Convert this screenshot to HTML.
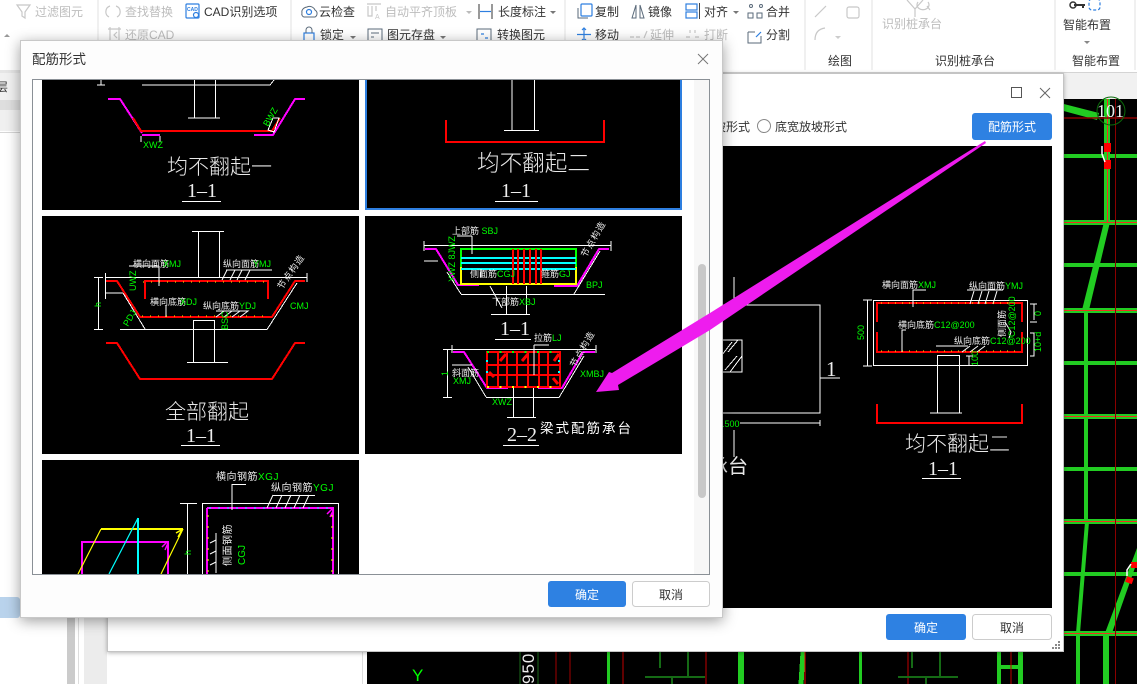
<!DOCTYPE html>
<html><head><meta charset="utf-8"><style>
html,body{margin:0;padding:0;background:#fff;width:1137px;height:684px;overflow:hidden}
svg{display:block;font-family:"Liberation Sans","Noto Sans CJK SC",sans-serif}
.t{font-size:12px;fill:#333}.d{font-size:12px;fill:#bdbdbd}
.c{font-size:9px;fill:#eee}.g{font-size:9px;fill:#0f0}
.big{font-size:21px;fill:#e8e8e8;font-family:"Noto Sans CJK SC","Liberation Sans",sans-serif;font-weight:300}
.num{font-size:20px;fill:#eee;font-family:"Liberation Serif",serif}
.w{stroke:#fff;fill:none;stroke-width:1}
.r{stroke:#f00;fill:none;stroke-width:2}.m{stroke:#f0f;fill:none;stroke-width:2}
.ic{fill:none;stroke:#5a6a7a;stroke-width:1}.ib{fill:none;stroke:#2e7fe0;stroke-width:1.2}.ig{fill:none;stroke:#c8c8c8;stroke-width:1.2}
</style></head><body>
<svg width="1137" height="684" viewBox="0 0 1137 684" xmlns="http://www.w3.org/2000/svg">
<defs>
<filter id="s" x="-5%" y="-5%" width="110%" height="112%"><feDropShadow dx="0" dy="3" stdDeviation="7" flood-color="#000" flood-opacity=".38"/></filter>
<filter id="s2" x="-3%" y="-3%" width="106%" height="106%"><feDropShadow dx="0" dy="1" stdDeviation="2" flood-color="#000" flood-opacity=".3"/></filter>
</defs>
<rect width="1137" height="684" fill="#fff"/>
<!-- ribbon -->
<rect x="0" y="72" width="1137" height="28" fill="#f1f1f1"/>
<line x1="0" y1="72.5" x2="1137" y2="72.5" stroke="#d4d4d4"/>
<g stroke="#e2e2e2"><line x1="98" y1="0" x2="98" y2="40"/><line x1="291" y1="0" x2="291" y2="40"/><line x1="565" y1="0" x2="565" y2="40"/><line x1="805" y1="0" x2="805" y2="70"/><line x1="872" y1="0" x2="872" y2="70"/><line x1="1055" y1="0" x2="1055" y2="70"/><line x1="1135" y1="0" x2="1135" y2="70"/></g>
<path d="M17 5h13l-5 7v6l-3-2v-4z" class="ig"/>
<text x="35" y="16" class="d">过滤图元</text>
<path d="M4 37l3-3 3 3z" fill="#999"/>
<path d="M110 6a6 6 0 0 0-1 11M116 6a6 6 0 0 1 1 11" class="ig"/>
<text x="125" y="16" class="d">查找替换</text>
<path d="M108 29h13M110 27v13M119 27v13M117 32l-3 3 3 3" class="ig"/>
<text x="125" y="39" class="d">还原CAD</text>
<rect x="186" y="4" width="13" height="14" rx="1" class="ib" stroke="#345"/>
<text x="187" y="11" font-size="5" fill="#2e7fe0" font-weight="bold">CAD</text>
<circle cx="196" cy="15" r="2.5" class="ib"/>
<text x="204" y="16" class="t">CAD识别选项</text>
<path d="M302 13a6 5 0 0 1 5-6a6 6 0 0 1 8 3a4 4 0 0 1 0 7h-11a3 3 0 0 1-2-4z" class="ic"/><circle cx="309" cy="12" r="2.5" class="ib"/>
<text x="319" y="16" class="t">云检查</text>
<path d="M367 4h14M368 6v10h4V6M376 6v5" class="ig"/><text x="375" y="19" font-size="7" fill="#c8c8c8">A</text>
<text x="385" y="16" class="d">自动平齐顶板</text>
<path d="M466 11l3 3 3-3z" fill="#bbb"/>
<path d="M479 4v15M492 4v15" stroke="#333" fill="none"/><path d="M480 11.5h11" class="ib"/>
<text x="498" y="16" class="t">长度标注</text>
<path d="M550 11l3 3 3-3z" fill="#777"/>
<rect x="304" y="33" width="10" height="9" class="ib" fill="#cfe0f5"/><path d="M306 33v-3a3 3 0 0 1 6 0v3" class="ic"/>
<text x="320" y="39" class="t">锁定</text>
<path d="M350 36l3 3 3-3z" fill="#777"/>
<rect x="368" y="29" width="14" height="14" class="ic"/><path d="M371 33h8M371 37h3" class="ic"/>
<text x="387" y="39" class="t">图元存盘</text>
<path d="M440 36l3 3 3-3z" fill="#777"/>
<rect x="477" y="29" width="14" height="14" class="ic"/><path d="M481 34h3M485 38h3" class="ib"/>
<text x="497" y="39" class="t">转换图元</text>
<rect x="581" y="4" width="11" height="12" rx="1" class="ib" fill="#fff"/><path d="M578 8v10h10" class="ic"/>
<text x="595" y="16" class="t">复制</text>
<path d="M632 18l4-13v13zM640 5l4 13h-4z" class="ic"/>
<text x="648" y="16" class="t">镜像</text>
<rect x="686" y="4" width="11" height="6" class="ib"/><rect x="686" y="12" width="11" height="6" class="ib"/><line x1="699.5" y1="3" x2="699.5" y2="19" stroke="#444"/>
<text x="704" y="16" class="t">对齐</text>
<path d="M733 11l3 3 3-3z" fill="#777"/>
<circle cx="751" cy="6" r="1.5" class="ic"/><circle cx="761" cy="6" r="1.5" class="ic"/><rect x="748" y="13" width="5" height="5" class="ic"/><rect x="757" y="13" width="5" height="5" class="ic"/>
<text x="766" y="16" class="t">合并</text>
<path d="M584 28v13M577 34.500h14M582 30l2-2 2 2M582 39l2 2 2-2" class="ib"/>
<text x="595" y="39" class="t">移动</text>
<path d="M630 37h4M636 37h4M644 38l3-7" class="ig"/>
<text x="650" y="39" class="d">延伸</text>
<path d="M686 37h4M695 37h4M690 30v3M695 30v3" class="ig"/>
<text x="704" y="39" class="d">打断</text>
<path d="M748 32h7M761 36v7h-13V32" class="ic"/><path d="M756 37l5-5" class="ib"/>
<text x="766" y="39" class="t">分割</text>
<path d="M815 17l11-11" class="ig"/><rect x="847" y="7" width="12" height="11" rx="2" class="ig"/>
<path d="M815 40c0-7 3-11 10-12" class="ig"/><path d="M835 36l3 3 3-3z" fill="#ccc"/>
<text x="828" y="65" class="t">绘图</text>
<path d="M907 0l8 9v0M923 0l-8 9v8M918 2a6 5 0 1 0 10 0M927 6l3 4" class="ig"/>
<text x="882" y="28" class="d">识别桩承台</text>
<text x="935" y="65" class="t">识别桩承台</text>
<path d="M1074 5h11M1083 5v3" stroke="#333" stroke-width="2" fill="none"/><circle cx="1073" cy="5" r="3" fill="none" stroke="#333" stroke-width="1.5"/>
<rect x="1089" y="-1" width="11" height="11" rx="3" class="ib" stroke-width="1.500" stroke-dasharray="3 2"/>
<text x="1063" y="29" class="t">智能布置</text>
<path d="M1084 41l3 3 3-3z" fill="#888"/>
<text x="1072" y="65" class="t">智能布置</text>

<!-- left panel -->
<rect x="0" y="70" width="22" height="3" fill="#e6e6e6"/>
<text x="-4" y="91" font-size="12" fill="#333">层</text>
<rect x="0" y="100" width="22" height="10" fill="#dedede"/>
<rect x="0" y="110" width="22" height="21" fill="#f0f0f0"/>
<line x1="0" y1="132.5" x2="22" y2="132.5" stroke="#d6d6d6"/>
<rect x="-5" y="597" width="25" height="21" rx="3" fill="#b9d3ec"/>
<!-- lower strips -->
<rect x="67" y="618" width="8" height="66" fill="#cbcbcb"/>
<line x1="78.5" y1="618" x2="78.5" y2="684" stroke="#ddd"/>
<rect x="84" y="618" width="23" height="66" fill="#ececec"/>
<line x1="362.5" y1="652" x2="362.5" y2="684" stroke="#ddd"/>

<!-- bottom CAD + right CAD -->
<rect x="367" y="652" width="770" height="32" fill="#000"/>
<rect x="1060" y="99" width="77" height="585" fill="#000"/>
<g shape-rendering="crispEdges">
<text x="412" y="681" font-size="17" fill="#0f0">Y</text>
<line x1="520" y1="652" x2="520" y2="684" stroke="#1a6a1a"/>
<line x1="538" y1="652" x2="538" y2="684" stroke="#1a6a1a"/>
<line x1="556" y1="652" x2="556" y2="684" stroke="#a00000"/>
<line x1="570" y1="652" x2="570" y2="684" stroke="#a00000"/>
<rect x="607" y="652" width="3" height="32" fill="#22cc22"/>
<line x1="623" y1="652" x2="623" y2="684" stroke="#c00000"/>
<path d="M660 652v16M688 652v16v9M645 677h60M672 677v7" stroke="#156a15" stroke-width="2" fill="none"/>
<line x1="706" y1="652" x2="706" y2="684" stroke="#c00000"/>
<rect x="738" y="652" width="6" height="32" fill="#22cc22"/>
<path d="M803 652l-2 32" stroke="#22cc22" stroke-width="5"/>
<line x1="805" y1="652" x2="805" y2="684" stroke="#f00000"/>
<rect x="859" y="652" width="3" height="32" fill="#22cc22"/>
<line x1="908" y1="652" x2="908" y2="684" stroke="#c00000"/>
<path d="M912 652v16M940 652v16v9M898 677h60M926 677v7" stroke="#156a15" stroke-width="2" fill="none"/>
<rect x="997" y="652" width="4" height="32" fill="#22cc22"/><rect x="1018" y="652" width="5" height="32" fill="#22cc22"/><rect x="997" y="665" width="25" height="4" fill="#22cc22"/>
<line x1="1011" y1="652" x2="1011" y2="684" stroke="#c00000"/>
</g>
<text transform="translate(534,684) rotate(-90)" font-size="17" fill="#eee" letter-spacing="1">950</text>
<!-- right grid -->
<g fill="#22cc22">
<rect x="1060" y="154" width="77" height="4"/>
<rect x="1060" y="220" width="77" height="5"/>
<rect x="1060" y="263" width="77" height="4"/>
<rect x="1060" y="308" width="77" height="5"/>
<rect x="1060" y="361" width="77" height="4"/>
<rect x="1060" y="414" width="77" height="5"/>
<rect x="1060" y="467" width="77" height="4"/>
<rect x="1060" y="519" width="77" height="5"/>
<rect x="1060" y="572" width="77" height="4"/>
<rect x="1060" y="631" width="77" height="5"/>
<rect x="1104" y="99" width="6" height="124"/>
<rect x="1084" y="310" width="4" height="212"/>
<rect x="1076" y="632" width="4" height="52"/>
<rect x="1103" y="632" width="6" height="52"/>
<polygon points="1060,103 1099,113 1097,120 1060,110"/>
<polygon points="1104,222 1110,222 1089,310 1082,310"/>
<polygon points="1085,522 1089,522 1080,633 1076,633"/>
<polygon points="1137,548 1137,562 1112,633 1105,633"/>
</g>
<g stroke="#f03020" stroke-width="1">
<line x1="1060" y1="222.5" x2="1137" y2="222.5"/><line x1="1060" y1="310.5" x2="1137" y2="310.5"/><line x1="1060" y1="416.5" x2="1137" y2="416.5"/><line x1="1060" y1="521.5" x2="1137" y2="521.5"/><line x1="1060" y1="633.5" x2="1137" y2="633.5"/><line x1="1107.5" y1="99" x2="1107.5" y2="222"/>
</g>
<line x1="1115.5" y1="99" x2="1115.5" y2="684" stroke="#8a0000"/>
<line x1="1060" y1="118" x2="1137" y2="118" stroke="#8a0000" stroke-width="1.5"/>
<rect x="1104" y="143" width="7" height="9" fill="#f00"/><rect x="1104" y="160" width="7" height="9" fill="#f00"/>
<path d="M1102 146v8l3 8" stroke="#fff" fill="none" stroke-width="1.5"/>
<rect x="1126" y="577" width="7" height="6" fill="#f00" transform="rotate(20 1129 580)"/><rect x="1131" y="562" width="6" height="6" fill="#f00"/>
<path d="M1131 564l-4 6v6" stroke="#fff" fill="none" stroke-width="1.5"/>
<circle cx="1111" cy="111" r="14" fill="none" stroke="#0a6a0a"/>
<text x="1097" y="117" font-size="18" fill="#eee" font-family="Liberation Serif">101</text>

<!-- dialog 2 -->
<rect x="107.500" y="73.500" width="956" height="578" fill="#fff" stroke="#c4c4c4" filter="url(#s2)"/>
<rect x="1011.500" y="87.500" width="10" height="10" fill="none" stroke="#555"/>
<path d="M1040 88l10 10M1050 88l-10 10" stroke="#666" fill="none"/>
<text x="714" y="131" font-size="12" fill="#333">坡形式</text>
<circle cx="764" cy="126" r="6.500" fill="#fff" stroke="#888"/>
<text x="775" y="131" font-size="12" fill="#333">底宽放坡形式</text>
<rect x="972" y="113" width="80" height="27" rx="3" fill="#2e81e2"/>
<text x="988" y="131" font-size="12" fill="#fff">配筋形式</text>
<rect x="716" y="146" width="336" height="462" fill="#000"/>
<g shape-rendering="crispEdges">
<path d="M720 305H820V413H720" class="w"/>
<path d="M734 277v28M734 430v27" class="w"/>
<rect x="715" y="340" width="27" height="32" class="w"/>
<path d="M725 370l12-14M730 372l12-16M722 355l10-13M728 352l10-12" class="w"/>
<path d="M820 378h20" class="w"/>
<path d="M740 423h80M820 420v6" class="w"/>
</g>
<text x="826" y="376" style="font-size:21px;fill:#eee;font-family:'Liberation Serif',serif">1</text>
<text x="722" y="427" font-size="9" fill="#0f0">.500</text>
<text x="714" y="298" class="num">2</text>
<text x="714" y="453" class="num">2</text>
<text x="708" y="473" font-size="20" fill="#e8e8e8">承台</text>
<g shape-rendering="crispEdges">
<rect x="873.500" y="300.500" width="154" height="65" class="w"/>
<path d="M877 322V303H1022V322" class="r"/>
<path d="M877 332V352H1022V332" class="r"/>
<path d="M937.500 413V355.500H959.500V413M930 413h32" class="w"/>
<path d="M877 404V423H1022V404" class="r" stroke-width="2"/>
<path d="M867.500 300v66M863 300h9M863 366h9" class="w"/>
<path d="M1030 304h7M1034 304v16M1030 322h7M1030 333h4v23h-4" class="w"/>
<path d="M969 366v-10M966 356h7" class="w"/>
<path d="M906 330h-4v22M925 329" class="w"/>
<path d="M926 290h-13v17" class="w"/>
<path d="M967 290h36" class="w"/>
<path d="M936 346h32" class="w"/>
<path d="M922 478.500h39" class="w"/>
</g>
<path d="M970 304l4-13M978 304l4-13M985 304l4-13M993 304l4-13M962 352l8-6M970 352l8-6M977 352l8-6M1005 322l6 10l-2 6" class="w"/>
<path d="M881 303H1020M881 351H1020" stroke="#ff0" stroke-width="1" stroke-dasharray="1 6" fill="none"/>
<text x="882" y="288" class="c">横向面筋<tspan fill="#0f0">XMJ</tspan></text>
<text x="969" y="289" class="c">纵向面筋<tspan fill="#0f0">YMJ</tspan></text>
<text x="898" y="328" class="c">横向底筋<tspan fill="#0f0">C12@200</tspan></text>
<text x="954" y="344" class="c">纵向底筋<tspan fill="#0f0">C12@200</tspan></text>
<text transform="translate(864,340) rotate(-90)" class="g">500</text>
<text transform="translate(1005,337) rotate(-90)" class="c">侧面筋</text>
<text transform="translate(1015,337) rotate(-90)" class="g">C12@200</text>
<text transform="translate(1041,316) rotate(-90)" class="g">0</text>
<text transform="translate(1041,352) rotate(-90)" class="g">10+d</text>
<text transform="translate(978,366) rotate(-90)" class="g">100</text>
<text x="905" y="451" class="big">均不翻起二</text>
<text x="928" y="475" class="num">1–1</text>
<rect x="886" y="614" width="80" height="26" rx="3" fill="#2e81e2"/>
<text x="914" y="632" font-size="12" fill="#fff">确定</text>
<rect x="972.500" y="614.500" width="79" height="25" rx="3" fill="#fff" stroke="#ccc"/>
<text x="1000" y="632" font-size="12" fill="#333">取消</text>
<g fill="#888"><rect x="1058" y="641" width="2" height="2"/><rect x="1055" y="644" width="2" height="2"/><rect x="1058" y="644" width="2" height="2"/><rect x="1052" y="647" width="2" height="2"/><rect x="1055" y="647" width="2" height="2"/><rect x="1058" y="647" width="2" height="2"/></g>

<!-- dialog 1 -->
<rect x="20.500" y="40.500" width="702" height="577" fill="#fdfdfd" stroke="#c8c8c8" filter="url(#s)"/>
<text x="32" y="64" font-size="13.500" fill="#333">配筋形式</text>
<path d="M698 54l10 10M708 54l-10 10" stroke="#777" fill="none"/>
<rect x="32.500" y="79.500" width="677" height="495" fill="#fff" stroke="#8a9096"/>
<rect x="694" y="80" width="15" height="494" fill="#f7f7f7"/>
<rect x="698" y="264" width="8" height="234" rx="4" fill="#c8c8c8"/>
<svg x="33" y="80" width="661" height="494" viewBox="33 80 661 494">
<!-- tile 1 -->
<rect x="42" y="60" width="317" height="150" fill="#000"/>
<g shape-rendering="crispEdges">
<path d="M97 85h8M101 80v5M142 85H270L274 80M194.500 80v38M215.500 80v38M188 118h32" class="w"/>
<path d="M108 99h12L142 133M142 135h18M305 99h-10L273 135H254" class="m"/>
<path d="M133 118l8 13H272L280 118" class="r"/>
<path d="M141 136v6M160 136v6M273 118l-5 12l6 2l5-14z" class="w"/>
<path d="M182 201.500h39" class="w"/>
</g>
<text x="143" y="148" class="g">XWZ</text>
<text transform="translate(268,127) rotate(-60)" class="g">BWZ</text>
<text x="167" y="174" class="big">均不翻起一</text>
<text x="187" y="197" class="num">1–1</text>
<!-- tile 2 -->
<rect x="366" y="60" width="315" height="149" fill="#000" stroke="#2e7fe0" stroke-width="2"/>
<g shape-rendering="crispEdges">
<path d="M512 80v50M534.500 80v50M504 130.500h35" class="w"/>
<path d="M446 120V142H604V120" class="r"/>
<path d="M495 201.500h43" class="w"/>
</g>
<text x="477" y="171" class="big" style="font-size:22.600px">均不翻起二</text>
<text x="501" y="197" class="num">1–1</text>
<!-- tile 3 -->
<rect x="42" y="216" width="317" height="238" fill="#000"/>
<g shape-rendering="crispEdges">
<path d="M198.500 231V277M219.500 231V277M192 231.500h32" class="w"/>
<path d="M105 277.500h202M105.500 273v26M307 273v9M105 293h18" class="w"/>
<path d="M106 281h11L140 317H272L295 281h10" class="r"/>
<path d="M145 299V281H268V299" class="r"/>
<path d="M120 329.500H267L297 283M145 329L123 293" class="w"/>
<path d="M193.500 362V320.500H214.500V362M187 362.500h41" class="w"/>
<path d="M106 343h11L140 379H272L295 343h10" class="r"/>
<path d="M98.500 277v52M94 277.500h9M94 329.500h9" class="w"/>
<path d="M181 445.500h39" class="w"/>
<path d="M159 266h-30M159 266v20M166 306v11" class="w"/>
<path d="M226 270h46M188 307" class="w"/>
</g>
<path d="M222 280l5-10M230 280l5-10M237 280l5-10M245 280l5-10M216 317l8-6M224 317l8-6M232 317l8-6M240 317l8-6h-32" class="w"/>
<path d="M143 282H266M142 316H270" stroke="#ff0" stroke-dasharray="1 7" fill="none"/>
<text x="133" y="267" class="c">横向面筋<tspan fill="#0f0" dx="-6">XMJ</tspan></text>
<text x="223" y="267" class="c">纵向面筋<tspan fill="#0f0" dx="-6">YMJ</tspan></text>
<text x="150" y="305" class="c">横向底筋<tspan fill="#0f0" dx="-6">XDJ</tspan></text>
<text x="203" y="309" class="c">纵向底筋<tspan fill="#0f0" dx="0">YDJ</tspan></text>
<text x="290" y="309" class="g">CMJ</text>
<text transform="translate(136,291) rotate(-90)" class="g">UWZ</text>
<text transform="translate(101,307) rotate(-90)" class="g">h</text>
<text transform="translate(128,327) rotate(-60)" class="g">PDJ</text>
<text transform="translate(228,330) rotate(-90)" class="g">BSC</text>
<text transform="translate(282,290) rotate(-55)" class="c" letter-spacing="1">节点构造</text>
<text x="165" y="419" class="big">全部翻起</text>
<text x="186" y="442" class="num">1–1</text>
<!-- tile 4 -->
<rect x="365" y="216" width="317" height="238" fill="#000"/>
<g shape-rendering="crispEdges">
<path d="M424 245.500H611M424 241v10M611 241v10" class="w"/>
<path d="M425 249h11L458 285h21M609 249h-10L577 286h-23" class="m"/>
<path d="M461 267V249H576V267" stroke="#0f0" stroke-width="2" fill="none"/>
<path d="M461 267V284H576V267" stroke="#ff0" stroke-width="2" fill="none"/>
<path d="M461 258h115M461 263h115M461 269h115" stroke="#0ff" stroke-width="2" fill="none"/>
<path d="M513 249v35M518 249v35M524 249v35M530 249v35M536 249v35M541 249v35" class="r"/>
<path d="M461 294.500H605M461 294L447 272M574 294L600 251M424 261h14" class="w"/>
<path d="M506.500 286v28M526.500 286v28M491 314.500h39" class="w"/>
<path d="M495 339.500h36" class="w"/>
<path d="M452 349.500H596M452 345v8M596 345v8" class="w"/>
<path d="M453 352h11L487 388h21M595 352h-12L562 388h-24" class="m"/>
<path d="M487 352H560V387H487ZM487 365H560M487 375H560M498 352v35M507 352v35M517 352v35M528 352v35M539 352v35M548 352v35" class="r"/>
<path d="M486 397.500H559L584 356M486 397L468 367M452 365h20" class="w"/>
<path d="M513.500 388v30M533.500 388v30M507 417.500h29" class="w"/>
<path d="M447.500 349v48M443 349.500h9M443 397.500h9" class="w"/>
<path d="M503 445.500h36" class="w"/>
<path d="M472 236h-15M472 236v18M534 345v30M534 345h15M481 277v-8M490 286l12 22" class="w"/>
</g>
<path d="M500 361l6-7M522 361l6-7M489 372l5 5M554 361l5-7M553 378l5 6" stroke="#f00" stroke-width="3" fill="none"/>
<path d="M487 352H560" stroke="#0f0" stroke-width="2" stroke-dasharray="2 10.500" fill="none"/>
<path d="M487 387H560" stroke="#ff0" stroke-width="2" stroke-dasharray="2 10.500" fill="none"/>
<path d="M487 360V380M559 360V380" stroke="#0ff" stroke-width="2" stroke-dasharray="2 9" fill="none"/>
<text x="452" y="234" class="c">上部筋 <tspan fill="#0f0">SBJ</tspan></text>
<text x="470" y="277" class="c">侧面筋<tspan fill="#0f0">CGJ</tspan></text>
<text x="541" y="277" class="c">箍筋<tspan fill="#0f0">GJ</tspan></text>
<text x="492" y="305" class="c">下部筋<tspan fill="#0f0">XBJ</tspan></text>
<text x="586" y="288" class="g">BPJ</text>
<text transform="translate(455,282) rotate(-90)" class="g">XWZ 8JWZ</text>
<text transform="translate(586,258) rotate(-60)" class="c" letter-spacing="1">节点构造</text>
<text x="534" y="341" class="c">拉筋<tspan fill="#0f0">LJ</tspan></text>
<text transform="translate(575,368) rotate(-60)" class="c" letter-spacing="1">节点构造</text>
<text x="452" y="376" class="c">斜面筋</text>
<text x="453" y="384" class="g">XMJ</text>
<text x="580" y="377" class="g">XMBJ</text>
<text x="492" y="405" class="g">XWZ</text>
<text transform="translate(448,376) rotate(-90)" class="g">1</text>
<text x="500" y="335" class="num">1–1</text>
<text x="507" y="441" class="num">2–2</text>
<text x="540" y="433" font-size="13.500" fill="#fff" letter-spacing="2">梁式配筋承台</text>
<!-- tile 5 -->
<rect x="42" y="460" width="317" height="120" fill="#000"/>
<g shape-rendering="crispEdges">
<path d="M101 529H183" stroke="#ff0" stroke-width="2" fill="none"/>
<path d="M82 574V542H168V574M82 542h86" class="m"/>
<path d="M138 518V574" stroke="#0ff" stroke-width="2" fill="none"/>
<path d="M187.500 503V574M180 503.500h17" class="w"/>
<rect x="202.500" y="503.500" width="136" height="80" class="w"/>
<path d="M207 508H333V580M207 508V580" class="m"/>
<path d="M246 484.500h-14V510" class="w"/>
<path d="M273 495.500h42" class="w"/>
</g>
<path d="M101 529L78 574M183 529L161 574" stroke="#ff0" stroke-width="1.200" fill="none"/>
<path d="M176 533l7-4M178 537l4-7" stroke="#ff0" stroke-width="1.500" fill="none"/>
<path d="M162 547l5-5M165 550l3-7M327 514l5-5M330 517l3-6" stroke="#f0f" stroke-width="1.500" fill="none"/>
<path d="M138 518L109 574" stroke="#0ff" stroke-width="1.200" fill="none"/>
<path d="M273 495l-6 13M282 495l-6 13M291 495l-6 13M300 495l-6 13M309 495l-6 13M216 533v40M216 540l-6 3M216 551l-6 3M216 562l-6 3" class="w"/>
<path d="M209 508H330" stroke="#0ff" stroke-dasharray="2 7" fill="none"/>
<path d="M208 515V574M332 515V574" stroke="#ff0" stroke-dasharray="2 9" fill="none"/>
<text x="216" y="480" font-size="10" fill="#eee" letter-spacing=".5">横向钢筋<tspan fill="#0f0">XGJ</tspan></text>
<text x="271" y="491" font-size="10" fill="#eee" letter-spacing=".5">纵向钢筋<tspan fill="#0f0">YGJ</tspan></text>
<text transform="translate(231,566) rotate(-90)" font-size="10" fill="#eee" letter-spacing=".5">侧面钢筋</text>
<text transform="translate(245,565) rotate(-90)" style="font-size:10px;fill:#0f0">CGJ</text>
<text transform="translate(191,555) rotate(-90)" class="g">h</text>
</svg>
<rect x="548" y="581" width="78" height="26" rx="3" fill="#2e81e2"/>
<text x="575" y="599" font-size="12" fill="#fff">确定</text>
<rect x="632.500" y="581.500" width="77" height="25" rx="3" fill="#fff" stroke="#ccc"/>
<text x="659" y="599" font-size="12" fill="#333">取消</text>

<!-- arrow -->
<polygon points="985,141 710,313 612,373 609,372 596,392 619,390 618,385 710,330 986,143" fill="#ee1cee"/>
</svg>
</body></html>
